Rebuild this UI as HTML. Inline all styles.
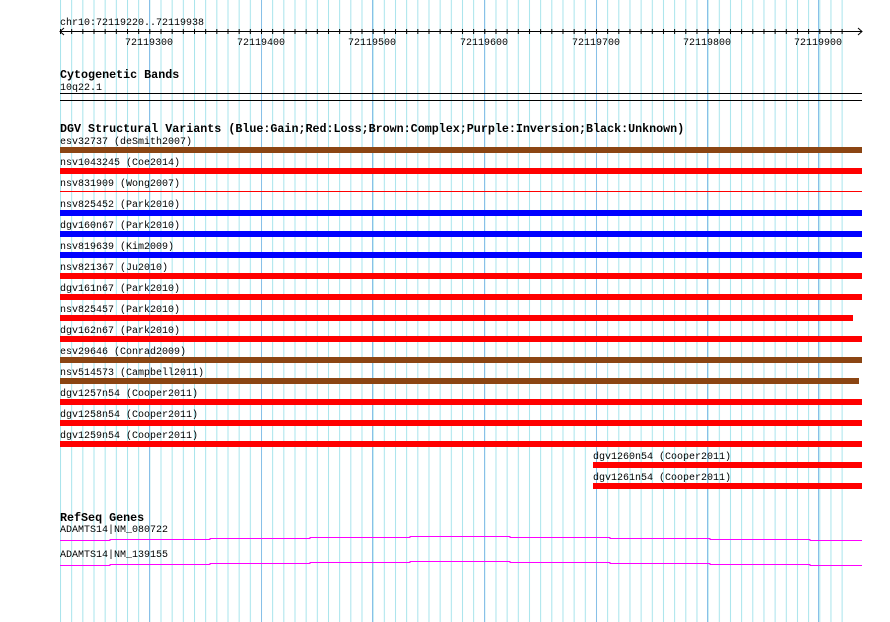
<!DOCTYPE html>
<html><head><meta charset="utf-8"><style>
html,body{margin:0;padding:0;background:#fff;width:890px;height:622px;overflow:hidden}
svg{display:block}
text{font-family:"Liberation Mono",monospace;font-size:10px;fill:#000}
.b{font-weight:bold;font-size:11.7px}
</style></head><body>
<svg width="890" height="622" viewBox="0 0 890 622">
<defs>
<pattern id="g" patternUnits="userSpaceOnUse" x="60" y="0" width="11.166" height="10"><rect x="0" y="0" width="1" height="10" fill="#a8e4ec"/></pattern>
<pattern id="t" patternUnits="userSpaceOnUse" x="60" y="0" width="11.166" height="10"><rect x="0" y="0" width="1" height="10" fill="#000"/></pattern>
</defs>
<rect x="0" y="0" width="890" height="622" fill="#fff"/>
<rect x="60" y="0" width="792" height="622" fill="url(#g)"/>
<g fill="#88c0e8">
<rect x="149" y="0" width="1" height="622"/><rect x="261" y="0" width="1" height="622"/><rect x="372" y="0" width="1" height="622"/><rect x="484" y="0" width="1" height="622"/><rect x="596" y="0" width="1" height="622"/><rect x="707" y="0" width="1" height="622"/><rect x="818" y="0" width="1" height="622"/>
</g>
<text x="60" y="25">chr10:72119220..72119938</text>
<rect x="60" y="31" width="802" height="1" fill="#000"/>
<rect x="60" y="29" width="792" height="5" fill="url(#t)"/>
<path d="M64 28 L60 31.5 L64 35 M858 28 L862 31.5 L858 35" stroke="#000" fill="none" stroke-width="1"/>
<g text-anchor="middle">
<text x="149" y="45">72119300</text><text x="261" y="45">72119400</text><text x="372" y="45">72119500</text><text x="484" y="45">72119600</text><text x="596" y="45">72119700</text><text x="707" y="45">72119800</text><text x="818" y="45">72119900</text>
</g>
<text class="b" x="60" y="78">Cytogenetic Bands</text>
<text x="60" y="90">10q22.1</text>
<rect x="60" y="93" width="802" height="1" fill="#000"/>
<rect x="60" y="100" width="802" height="1" fill="#000"/>
<text class="b" x="60" y="132">DGV Structural Variants (Blue:Gain;Red:Loss;Brown:Complex;Purple:Inversion;Black:Unknown)</text>
<text x="60" y="144">esv32737 (deSmith2007)</text><rect x="60" y="147" width="802" height="6" fill="#8b4513"/>
<text x="60" y="165">nsv1043245 (Coe2014)</text><rect x="60" y="168" width="802" height="6" fill="#f00"/>
<text x="60" y="186">nsv831909 (Wong2007)</text><rect x="60" y="191" width="802" height="1" fill="#f00"/>
<text x="60" y="207">nsv825452 (Park2010)</text><rect x="60" y="210" width="802" height="6" fill="#00f"/>
<text x="60" y="228">dgv160n67 (Park2010)</text><rect x="60" y="231" width="802" height="6" fill="#00f"/>
<text x="60" y="249">nsv819639 (Kim2009)</text><rect x="60" y="252" width="802" height="6" fill="#00f"/>
<text x="60" y="270">nsv821367 (Ju2010)</text><rect x="60" y="273" width="802" height="6" fill="#f00"/>
<text x="60" y="291">dgv161n67 (Park2010)</text><rect x="60" y="294" width="802" height="6" fill="#f00"/>
<text x="60" y="312">nsv825457 (Park2010)</text><rect x="60" y="315" width="793" height="6" fill="#f00"/>
<text x="60" y="333">dgv162n67 (Park2010)</text><rect x="60" y="336" width="802" height="6" fill="#f00"/>
<text x="60" y="354">esv29646 (Conrad2009)</text><rect x="60" y="357" width="802" height="6" fill="#8b4513"/>
<text x="60" y="375">nsv514573 (Campbell2011)</text><rect x="60" y="378" width="799" height="6" fill="#8b4513"/>
<text x="60" y="396">dgv1257n54 (Cooper2011)</text><rect x="60" y="399" width="802" height="6" fill="#f00"/>
<text x="60" y="417">dgv1258n54 (Cooper2011)</text><rect x="60" y="420" width="802" height="6" fill="#f00"/>
<text x="60" y="438">dgv1259n54 (Cooper2011)</text><rect x="60" y="441" width="802" height="6" fill="#f00"/>
<text x="593" y="459">dgv1260n54 (Cooper2011)</text><rect x="593" y="462" width="269" height="6" fill="#f00"/>
<text x="593" y="480">dgv1261n54 (Cooper2011)</text><rect x="593" y="483" width="269" height="6" fill="#f00"/>
<text class="b" x="60" y="521">RefSeq Genes</text>
<text x="60" y="532">ADAMTS14|NM_080722</text>
<path d="M60 540.5H110V539.5H210V538.5H310V537.5H410V536.5H510V537.5H610V538.5H710V539.5H810V540.5H862" stroke="#f0f" fill="none" stroke-width="1"/>
<text x="60" y="557">ADAMTS14|NM_139155</text>
<path d="M60 565.5H110V564.5H210V563.5H310V562.5H410V561.5H510V562.5H610V563.5H710V564.5H810V565.5H862" stroke="#f0f" fill="none" stroke-width="1"/>
</svg>
</body></html>
